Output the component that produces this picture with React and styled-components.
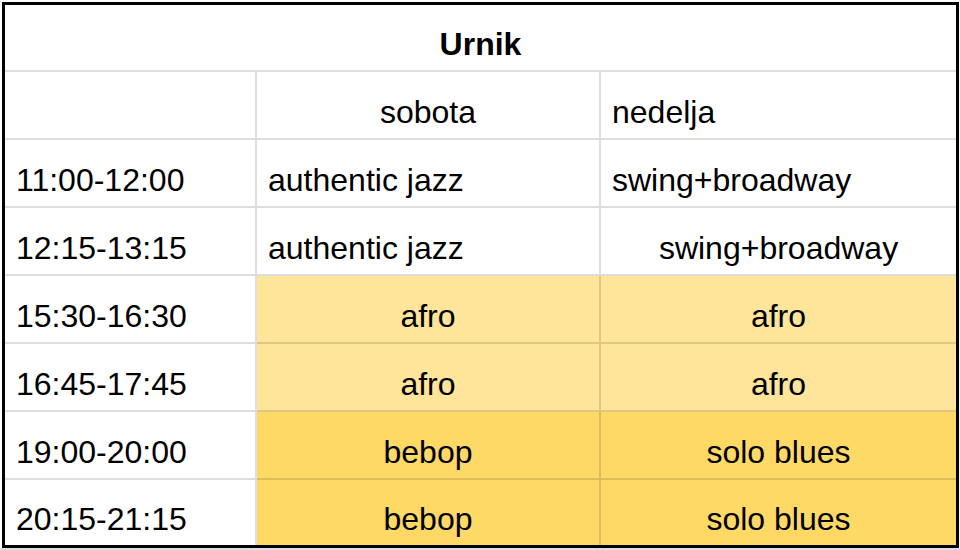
import React from "react";
import styled, { createGlobalStyle } from "styled-components";

const GlobalStyle = createGlobalStyle`
  html, body {
    margin: 0;
    padding: 0;
    background: #ffffff;
  }
  body {
    font-family: "Liberation Sans", Arial, sans-serif;
    color: #000;
  }
`;

const Page = styled.div`
  width: 960px;
  height: 550px;
  padding: 2px 0 0 2px;
  box-sizing: border-box;
  background: linear-gradient(to bottom, #fff 548px, #dcdde5 548px);
`;

const Table = styled.div`
  width: 957px;
  height: 546px;
  box-sizing: border-box;
  border: 3px solid #000;
  display: grid;
  grid-template-columns: 252px 344px 1fr;
  grid-template-rows: 67px repeat(6, 68px) 1fr;
  background: #fff;
`;

const fills = {
  white: "#ffffff",
  light: "#ffe599",
  yellow: "#ffd966",
};

const line = "2px solid rgba(0, 0, 0, 0.13)";

const Cell = styled.div`
  box-sizing: border-box;
  display: flex;
  align-items: flex-end;
  justify-content: ${(p) => (p.$center ? "center" : "flex-start")};
  padding: 0 11px 7px;
  background: ${(p) => fills[p.$fill || "white"]};
  border-right: ${(p) => (p.$last ? "none" : line)};
  border-bottom: ${(p) => (p.$bottom ? "none" : line)};
  font-size: 32px;
  line-height: 37px;
  white-space: nowrap;
`;

const TitleCell = styled(Cell)`
  grid-column: 1 / -1;
  font-weight: bold;
  padding-bottom: 7px;
`;

const TimeCell = styled(Cell)`
  padding-left: 11px;
`;

const rows = [
  { time: "11:00-12:00", sat: "authentic jazz", sun: "swing+broadway" },
  { time: "12:15-13:15", sat: "authentic jazz", sun: "swing+broadway", sunCenter: true },
  { time: "15:30-16:30", sat: "afro", sun: "afro", fill: "light", center: true },
  { time: "16:45-17:45", sat: "afro", sun: "afro", fill: "light", center: true },
  { time: "19:00-20:00", sat: "bebop", sun: "solo blues", fill: "yellow", center: true },
  { time: "20:15-21:15", sat: "bebop", sun: "solo blues", fill: "yellow", center: true },
];

const App = () => {
  return (
    <Page>
      <GlobalStyle />
      <Table>
        <TitleCell $center $last>Urnik</TitleCell>

        <TimeCell />
        <Cell $center>sobota</Cell>
        <Cell $last>nedelja</Cell>

        {rows.map((r, i) => {
          const bottom = i === rows.length - 1;
          return (
            <React.Fragment key={r.time}>
              <TimeCell $bottom={bottom}>{r.time}</TimeCell>
              <Cell $fill={r.fill} $center={r.center} $bottom={bottom}>
                {r.sat}
              </Cell>
              <Cell
                $fill={r.fill}
                $center={r.center || r.sunCenter}
                $bottom={bottom}
                $last
              >
                {r.sun}
              </Cell>
            </React.Fragment>
          );
        })}
      </Table>
    </Page>
  );
};

export default App;
